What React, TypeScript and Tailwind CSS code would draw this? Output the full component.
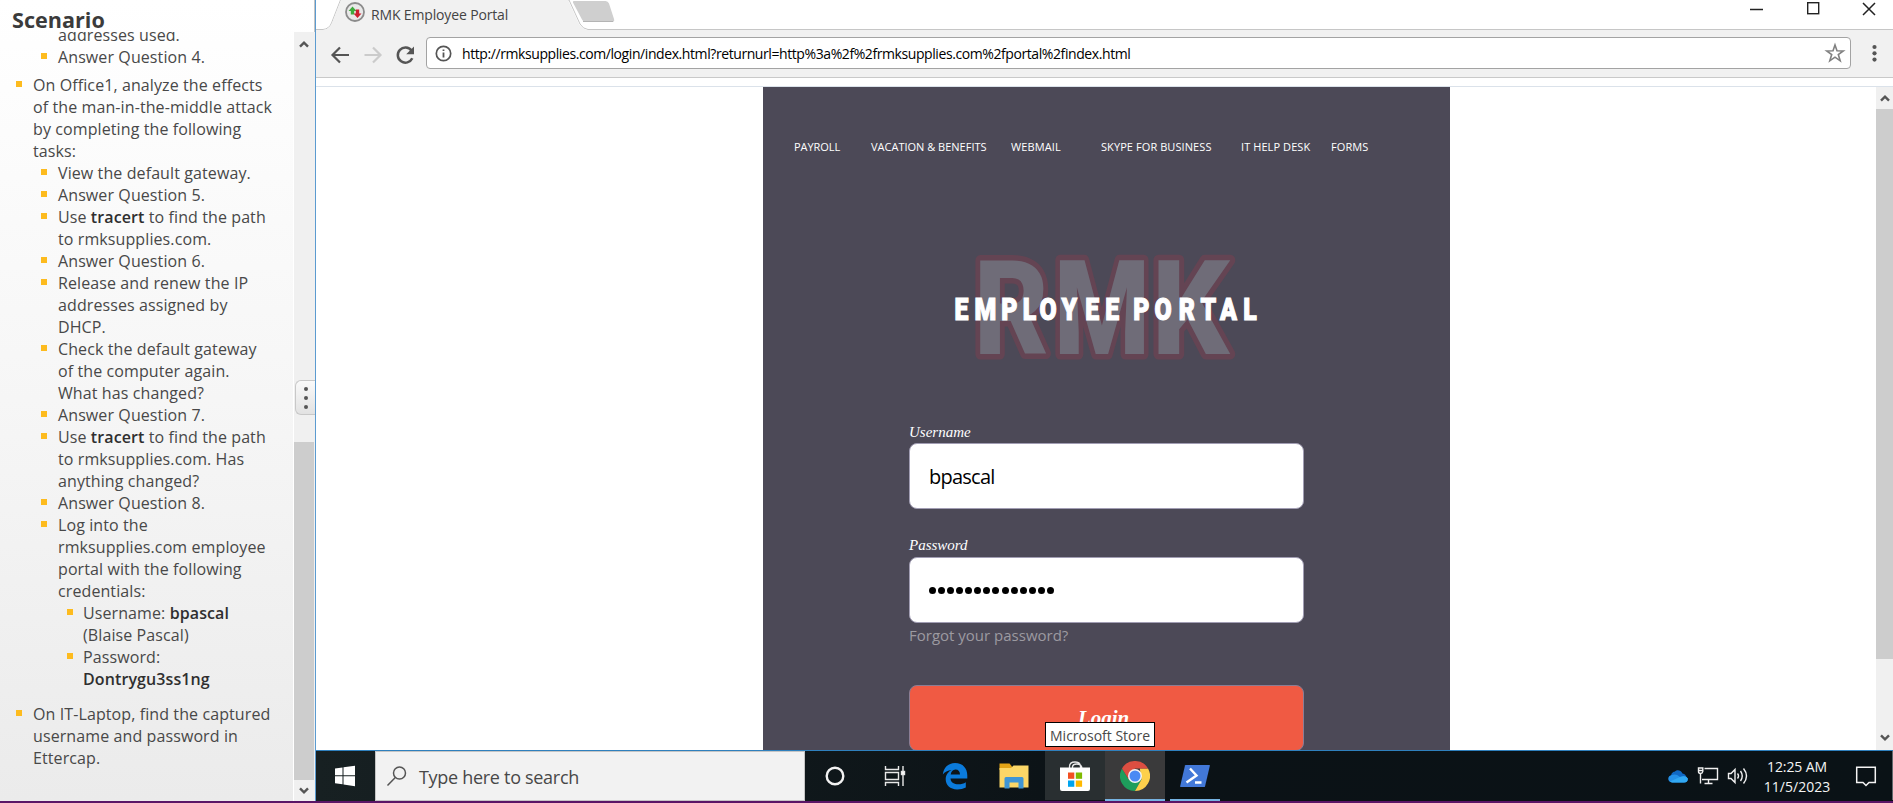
import type { ReactNode } from "react";

const sans = "font-['Open_Sans','Noto_Sans',sans-serif]";
const serif = "font-['Liberation_Serif',serif]";

function Item({ level, lines, className = "" }: { level: 1 | 2 | 3; lines: ReactNode[]; className?: string }) {
  const indent = { 1: "pl-[16px]", 2: "pl-[41px]", 3: "pl-[67px]" }[level];
  const gap = { 1: "gap-[11px]", 2: "gap-[11px]", 3: "gap-[10px]" }[level];
  return (
    <li className={`flex items-start ${indent} ${gap} ${className}`}>
      <span className="mt-[7px] h-[6px] w-[6px] shrink-0 bg-[#fdbb1e]" />
      <div>
        {lines.map((line, i) => (
          <div key={i} className="h-[22px] whitespace-nowrap">{line}</div>
        ))}
      </div>
    </li>
  );
}

function Chevron({ down = false }: { down?: boolean }) {
  return (
    <svg width="10" height="8" viewBox="0 0 10 8" className={down ? "rotate-180" : ""}>
      <path d="M1 6.6 5 2.6 9 6.6" fill="none" stroke="#555" strokeWidth="2.4" />
    </svg>
  );
}

function Sidebar() {
  const b = "font-semibold text-[#2f2f2f]";
  return (
    <aside className={`flex h-[801px] w-[316px] shrink-0 flex-col border-r border-[#5b9bd0] bg-linear-to-b from-white via-[#f6f6f6] to-[#ebebeb] ${sans}`}>
      <h1 className="h-[32px] shrink-0 border-r border-[#c4c4c4] pl-[12px] pt-[5px] text-[21.6px] leading-[30px] font-bold text-[#3b3b3b]">Scenario</h1>
      <div className="flex min-h-0 flex-1">
        <ul className="w-[293px] overflow-hidden text-[16px] leading-[22px] tracking-[0.1px] text-[#484848]">
          <li className="-mt-[8px] h-[22px] pl-[58px]">addresses used.</li>
          <Item level={2} lines={["Answer Question 4."]} />
          <Item level={1} className="mt-[6px]" lines={["On Office1, analyze the effects", "of the man-in-the-middle attack", "by completing the following", "tasks:"]} />
          <Item level={2} lines={["View the default gateway."]} />
          <Item level={2} lines={["Answer Question 5."]} />
          <Item level={2} lines={[<>Use <b className={b}>tracert</b> to find the path</>, "to rmksupplies.com."]} />
          <Item level={2} lines={["Answer Question 6."]} />
          <Item level={2} lines={["Release and renew the IP", "addresses assigned by", "DHCP."]} />
          <Item level={2} lines={["Check the default gateway", "of the computer again.", "What has changed?"]} />
          <Item level={2} lines={["Answer Question 7."]} />
          <Item level={2} lines={[<>Use <b className={b}>tracert</b> to find the path</>, "to rmksupplies.com. Has", "anything changed?"]} />
          <Item level={2} lines={["Answer Question 8."]} />
          <Item level={2} lines={["Log into the", "rmksupplies.com employee", "portal with the following", "credentials:"]} />
          <Item level={3} lines={[<>Username: <b className={b}>bpascal</b></>, "(Blaise Pascal)"]} />
          <Item level={3} lines={["Password:", <b className={b}>Dontrygu3ss1ng</b>]} />
          <Item level={1} className="mt-[13px]" lines={["On IT-Laptop, find the captured", "username and password in", "Ettercap."]} />
        </ul>
        <div className="relative flex w-[22px] flex-col items-center border-l border-white bg-[#f0f0f0]">
          <div className="flex h-[21px] w-full items-center justify-center pt-[3px] pr-px"><Chevron /></div>
          <div className="mt-[389px] h-[338px] w-[20px] self-start bg-[#cdcdcd]" />
          <div className="flex h-[21px] w-full items-center justify-center pr-px"><Chevron down /></div>
          <div className="absolute right-0 top-[348px] flex h-[35px] w-[20px] flex-col items-center justify-center gap-[5px] rounded-l-md border border-r-0 border-[#c8c8c8] bg-linear-to-b from-[#fafafa] to-[#e2e2e2]">
            <span className="h-1 w-1 rounded-full bg-[#555]" />
            <span className="h-1 w-1 rounded-full bg-[#555]" />
            <span className="h-1 w-1 rounded-full bg-[#555]" />
          </div>
        </div>
      </div>
    </aside>
  );
}

function TabStrip() {
  return (
    <div className="relative flex h-[30px] justify-between bg-white">
      <svg className="absolute inset-0" width="1577" height="30">
        <path d="M0 29.5H7Q13 29 15.500 23L24.500 0H253L264 24Q267 29 272 29.500H1577" fill="none" stroke="#c6c6c6" />
        <path d="M7 30Q14 29 16 23L25 0H252L263 24Q266 29 271 30Z" fill="#f1f1f1" />
        <path d="M258 1H289.500Q292 1 293 3.500L298 19Q299 22 296 22H270Q267 22 266 19.500L257.500 3.500Q256 1 258 1Z" fill="#cfcfcf" />
        <path d="M267 21.500H297" stroke="#b4b4b4" />
      </svg>
      <div className="relative flex pl-[29px]">
        <svg width="20" height="22" viewBox="0 0 20 22" className="mt-[1px]">
          <circle cx="10" cy="11" r="9" fill="#e9e9e9" stroke="#8b8b8b" strokeWidth="1.800" />
          <path d="M7.500 5.500 11.500 10H9.200V13.500H5.800V10H3.500Z" fill="#3faa3c" />
          <path d="M12.500 17 8.500 12.500H10.800V8.500H14.200V12.500H16.500Z" fill="#cc1f2f" />
        </svg>
        <span className={`pl-[6px] pt-[4px] text-[14px] leading-[21px] tracking-[-0.150px] text-[#444] ${sans}`}>RMK Employee Portal</span>
      </div>
      <svg className="relative" width="160" height="20">
        <path d="M17 9.500H30" stroke="#222" strokeWidth="1.500" />
        <rect x="74.700" y="2.700" width="11" height="11" fill="none" stroke="#222" strokeWidth="1.400" />
        <path d="M130 3 142 15M142 3 130 15" stroke="#222" strokeWidth="1.500" />
      </svg>
    </div>
  );
}

function Toolbar() {
  return (
    <div className="flex h-[48px] items-center border-b border-[#c9c9c9] bg-[#f1f1f1] pb-px">
      <svg width="110" height="24" viewBox="0 0 110 24" className="mt-[3px] shrink-0" fill="none">
        <path d="M33 12H17M24 4.500 16.500 12 24 19.500" stroke="#555" strokeWidth="2.200" />
        <path d="M48.500 12H64M57 4.500 64.500 12 57 19.500" stroke="#cbcbcb" strokeWidth="2.200" />
        <path d="M95.500 7.500A7.600 7.600 0 1 0 96.300 15.300" stroke="#555" strokeWidth="2.500" />
        <path d="M98 3.500V11.300H90.200Z" fill="#555" />
      </svg>
      <div className="flex h-[32px] w-[1425px] items-center rounded-[4px] border border-[#a3a3a3] bg-white">
        <svg width="17" height="17" viewBox="0 0 17 17" className="ml-[8px]">
          <circle cx="8.500" cy="8.500" r="7.200" fill="none" stroke="#555" strokeWidth="1.700" />
          <path d="M8.500 7.500V12.500M8.500 4.500V6" stroke="#555" strokeWidth="1.800" />
        </svg>
        <span className={`ml-[10px] flex-1 pt-px text-[14px] leading-5 tracking-[-0.415px] text-black ${sans}`}>
          http://rmksupplies.com/login/index.html?returnurl=http%3a%2f%2frmksupplies.com%2fportal%2findex.html
        </span>
        <svg width="22" height="22" viewBox="0 0 22 22" className="mr-[4px]">
          <path d="M11 3 13 8.700 19.300 8.900 14.300 12.600 16.200 18.800 11 15.200 5.800 18.800 7.700 12.600 2.700 8.900 9 8.700Z" fill="none" stroke="#808080" strokeWidth="1.600" />
        </svg>
      </div>
      <svg width="42" height="20" viewBox="0 0 42 20" fill="#555">
        <circle cx="23.500" cy="4" r="2.100" />
        <circle cx="23.500" cy="10.300" r="2.100" />
        <circle cx="23.500" cy="16.600" r="2.100" />
      </svg>
    </div>
  );
}

function Logo() {
  return (
    <svg width="330" height="120" viewBox="0 0 330 120" className="mx-auto block">
      <g fontFamily="Roboto, sans-serif" fontWeight="900" fontSize="131" strokeLinejoin="round" stroke="#644453" strokeWidth="11" fill="#6f6c78" style={{ paintOrder: "stroke" }}>
        <text x="32" y="108" textLength="75" lengthAdjust="spacingAndGlyphs">R</text>
        <text x="112" y="108" textLength="96" lengthAdjust="spacingAndGlyphs">M</text>
        <text x="210" y="108" textLength="77" lengthAdjust="spacingAndGlyphs">K</text>
      </g>
      <text
        transform="scale(0.8 1)"
        x="15.5 40.5 74 101 122 149.5 179 204 224 239 265.500 296 323 347.500 376.500"
        y="74"
        fontFamily="Roboto, sans-serif"
        fontWeight="900"
        fontSize="31"
        fill="#fff"
        stroke="#fff"
        strokeWidth="1.200"
      >
        EMPLOYEE PORTAL
      </text>
    </svg>
  );
}

function Portal() {
  const field = "flex h-[66px] w-[395px] items-center rounded-[8px] border border-[#a19db3] bg-white pl-[19px] text-black";
  return (
    <main className={`h-[663px] w-[687px] shrink-0 overflow-hidden bg-[#4c4957] ${sans}`}>
      <nav className="flex pl-[31px] pt-[52px] text-[11px] leading-4 font-medium text-white">
        <span className="w-[77px] tracking-[-0.050px]">PAYROLL</span>
        <span className="w-[140px]">VACATION &amp; BENEFITS</span>
        <span className="w-[90px] tracking-[0.100px]">WEBMAIL</span>
        <span className="w-[140px] tracking-[0.080px]">SKYPE FOR BUSINESS</span>
        <span className="w-[90px] tracking-[0.080px]">IT HELP DESK</span>
        <span className="tracking-[0.080px]">FORMS</span>
      </nav>
      <div className="mt-[91px]"><Logo /></div>
      <form className="ml-[146px] mt-[57px]">
        <label className={`block h-[20px] text-[15px] leading-[18px] text-white italic ${serif}`}>Username</label>
        <div className={field}><span className="pt-px text-[20px] tracking-[-0.750px]">bpascal</span></div>
        <label className={`mt-[27px] block h-[21px] text-[15px] leading-[18px] text-white italic ${serif}`}>Password</label>
        <div className={`${field} gap-[2px] pt-px`}>
          {Array.from({ length: 14 }, (_, i) => <span key={i} className="mr-[0.070px] h-[7px] w-[7px] rounded-full bg-black" />)}
        </div>
        <a className="block h-[62px] pt-[1px] text-[15px] leading-[23px] text-[#9c9aa1]">Forgot your password?</a>
        <button type="button" className={`flex h-[66px] w-[395px] justify-center rounded-[8px] border border-[#8a7d94] bg-[#f05a43] pt-[20px] text-[21px] leading-6 font-bold text-white italic ${serif}`}>
          <span className="-ml-[6px]">Login</span>
        </button>
      </form>
    </main>
  );
}

function Slot({ children, className = "" }: { children: ReactNode; className?: string }) {
  return <div className={`relative flex h-[49px] shrink-0 items-center justify-center ${className}`}>{children}</div>;
}

function Taskbar() {
  return (
    <div className="relative flex h-[51px] items-start border-t border-[#2f80bd] bg-linear-to-r from-[#172022] via-[#0b1216] to-[#0a1216]">
      <Slot className="w-[59px]">
        <svg width="22" height="22" viewBox="0 0 22 22" fill="#fff" className="-ml-[2px]">
          <path d="M1 3.500 8.500 2.500V10.300H1ZM9.500 2.300 21 .700V10.300H9.500ZM1 11.300H8.500V19.200L1 18.300ZM9.500 11.300H21V21.300L9.500 19.500Z" />
        </svg>
      </Slot>
      <div className="flex h-[50px] w-[430px] shrink-0 items-center border border-[#c5c5c5] bg-[#f2f2f2] pl-[10px]">
        <svg width="22" height="22" viewBox="0 0 22 22" fill="none" stroke="#555" strokeWidth="1.500">
          <circle cx="13.500" cy="8" r="6" />
          <path d="M9.300 12.500 1.500 20.500" />
        </svg>
        <span className={`pl-[11px] pt-[3px] text-[18px] tracking-[-0.300px] text-[#484848] ${sans}`}>Type here to search</span>
      </div>
      <Slot className="w-[60px]">
        <svg width="22" height="22"><circle cx="11" cy="11" r="8.300" fill="none" stroke="#f2f2f2" strokeWidth="2.400" /></svg>
      </Slot>
      <Slot className="w-[60px]">
        <svg width="22" height="22" viewBox="0 0 22 22" fill="none" stroke="#e8e8e8" strokeWidth="1.400">
          <path d="M1.500 1V4.500H14.500V1M1.500 21V17.500H14.500V21M1.500 7.500H14.500V14.500H1.500ZM19 1V21" />
          <rect x="17.500" y="6.500" width="3" height="3" fill="#fff" />
        </svg>
      </Slot>
      <Slot className="w-[60px]">
        <svg width="26" height="28" viewBox="0 0 26 28">
          <path d="M.8 12.500C1.500 6 6 1 13 1c8 0 12.300 5.500 12.300 12.500V16.500H8.500c.3 4.200 4 5.800 7.800 5.800 3 0 5.400-.8 7.500-2.100v5.300c-2.500 1.300-5.300 1.900-8.600 1.900C8 27.400 3.700 23 3.700 17.300c0-4.300 2.300-7.600 6-9.400C5.800 8.200 2.600 10 .8 12.500ZM8.700 12.600H18c0-3-1.500-5-4.600-5C10.700 7.600 9.100 9.900 8.700 12.600Z" fill="#0b7bdc" fillRule="evenodd" />
        </svg>
      </Slot>
      <Slot className="w-[60px]">
        <svg width="30" height="28" viewBox="0 0 30 28" className="-ml-[2px]">
          <path d="M.5 1.500H10.500L13 4.500V8H.5Z" fill="#e2a316" />
          <path d="M.5 6H12L14.500 3.500H29.500V25.500H.5Z" fill="#fbd667" />
          <path d="M5.500 26.500V16.500Q5.500 15 7 15H23Q24.500 15 24.500 16.500V26.500H19.500V20.500H10.500V26.500Z" fill="#3f95d5" />
        </svg>
      </Slot>
      <Slot className="w-[60px] bg-[#292f31]">
        <svg width="30" height="32" viewBox="0 0 30 32">
          <path d="M9.500 9V6.500Q9.500 2 15 2T20.500 6.500V9M12.500 9V6.500Q13 4 16.500 4Q22 4 22 9" fill="none" stroke="#e9e9e9" strokeWidth="1.300" />
          <path d="M0 7.500H30V29Q30 31 28 31H2Q0 31 0 29Z" fill="#fff" />
          <path d="M8 12.500h6.300v6.300H8Z" fill="#f25022" />
          <path d="M15.800 12.500h6.300v6.300h-6.300Z" fill="#7fba00" />
          <path d="M8 20.500h6.300v6.300H8Z" fill="#00a4ef" />
          <path d="M15.800 20.500h6.300v6.300h-6.300Z" fill="#ffb900" />
        </svg>
      </Slot>
      <Slot className="w-[60px] bg-[#3a3a3b]">
        <svg width="30" height="30" viewBox="0 0 30 30">
          <path d="M2 7.500A15 15 0 0 0 15 30L21.500 18.500 15 15 8.800 18.500Z" fill="#1e9e5c" />
          <path d="M28 7.500A15 15 0 0 1 15 30L21.500 18.500 20 9V7.500Z" fill="#fdd04c" />
          <path d="M2 7.500A15 15 0 0 1 28 7.500H15L8.800 18.500Z" fill="#dc4e41" />
          <circle cx="15" cy="15" r="7" fill="#f4f4f4" />
          <circle cx="15" cy="15" r="5.500" fill="#4a8af4" />
        </svg>
        <span className="absolute -bottom-px left-0 h-[2px] w-[60px] bg-[#76b3e2]" />
      </Slot>
      <Slot className="w-[60px]">
        <svg width="30" height="24" viewBox="0 0 30 24">
          <path d="M5.500 1H29.500Q30 1 29.800 2L25 22.500Q24.800 23 24 23H.5Q0 23 .2 22L5 1.500Z" fill="#4278d8" />
          <path d="M10 4.500 16.500 11.500 6.500 18.500M15 18.500H21.500" fill="none" stroke="#fff" strokeWidth="2.400" />
        </svg>
        <span className="absolute -bottom-px left-[5px] h-[2px] w-[50px] bg-[#76b3e2]" />
      </Slot>
      <div className="flex flex-1" />
      <div className="flex h-[49px] shrink-0 items-center">
        <svg width="20" height="14" viewBox="0 0 20 14">
          <path d="M3 8C3 4 5 3 6.500 2.800 8 .8 12.500 0 14.500 4.500Q18 5 18 8L10 9Z" fill="#1068c4" />
          <path d="M4 13.500C-1 13-1 6.500 4 6Q8 4.500 12 8Q18 6 19.800 9.500Q20 13.500 16 13.500Z" fill="#2490e8" />
          <path d="M2 12.500 12 8Q18 6 19.800 9.500Q20 13.500 16 13.500H4Z" fill="#31a8f2" />
        </svg>
        <svg width="22" height="20" viewBox="0 0 22 20" className="ml-[9px]" fill="none" stroke="#f0f0f0" strokeWidth="1.400">
          <path d="M7.500 2.500H20.500V13.500H5M11.500 14V17.500M7.500 17.500H15.500M3.500 8V17.500" />
          <path d="M1.500 2V5.500Q1.500 7.500 3.500 7.500T5.800 5.500V2ZM1 4.500H6" />
        </svg>
        <svg width="22" height="20" viewBox="0 0 22 20" className="ml-[8px]" fill="none" stroke="#f0f0f0" strokeWidth="1.400">
          <path d="M1.500 7.500H4L8 3.500V16.500L4 12.500H1.500ZM10.500 7.500Q12.500 10 10.500 12.500M13.500 5Q17 10 13.500 15M16.500 2.500Q22.500 10 16.500 17.500" />
        </svg>
        <div className={`ml-[8px] mt-[2px] w-[80px] text-center text-[14px] leading-[20px] text-[#f4f4f4] ${sans}`}>
          <div className="tracking-[-0.100px]">12:25 AM</div>
          <div>11/5/2023</div>
        </div>
        <svg width="22" height="22" viewBox="0 0 22 22" className="ml-[18px] mr-[15px]" fill="none" stroke="#f4f4f4" strokeWidth="1.500">
          <path d="M1.700 2.200H20.300V17.500H14L11 20.500 8 17.500H1.700Z" />
        </svg>
        <span className="h-[49px] w-px bg-[#626a6e]" />
      </div>
      <div className={`absolute -top-[29px] left-[729px] h-[25px] w-[110px] border border-black bg-white pl-[4px] text-[14px] leading-[25px] whitespace-nowrap text-[#484848] ${sans}`}>Microsoft Store</div>
    </div>
  );
}

export default function App() {
  return (
    <div className="flex h-[803px] w-[1893px] flex-col overflow-hidden bg-white">
      <div className="flex h-[801px]">
        <Sidebar />
        <section className="flex w-[1577px] flex-col">
          <TabStrip />
          <Toolbar />
          <div className="h-[9px] shrink-0 border-b border-[#dbe2ea] bg-white" />
          <div className="flex h-[663px] shrink-0 justify-between">
            <div className="w-[447px]" />
            <Portal />
            <div className="flex w-[443px] justify-end">
              <div className="flex w-[17px] flex-col items-center bg-[#f0f0f0]">
                <div className="flex h-[22px] items-center"><Chevron /></div>
                <div className="h-[551px] w-full bg-[#cdcdcd]" />
                <div className="mt-[67px] flex h-[24px] items-center"><Chevron down /></div>
              </div>
            </div>
          </div>
          <Taskbar />
        </section>
      </div>
      <div className="h-[2px] bg-[#5b1566]" />
    </div>
  );
}
